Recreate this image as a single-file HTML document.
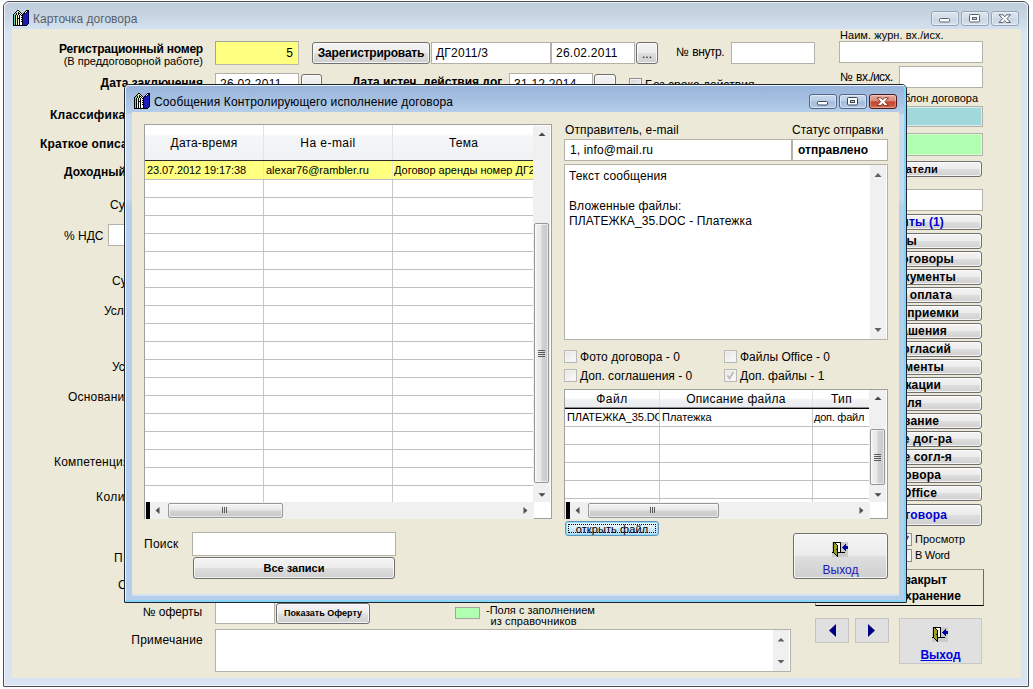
<!DOCTYPE html><html lang="ru"><head><meta charset="utf-8"><title>Карточка договора</title><style>
*{box-sizing:border-box;margin:0;padding:0}
html,body{width:1033px;height:689px;overflow:hidden;background:#fff}
body{position:relative;font-family:"Liberation Sans",sans-serif;font-size:12px;line-height:14px;color:#000}
.a{position:absolute;white-space:nowrap}
.b{font-weight:bold}
.r{text-align:right}
.c{text-align:center}
.s{font-size:11px;line-height:13px}
.f{position:absolute;background:#fff;border:1px solid #b4b2a8;white-space:nowrap;overflow:hidden;padding:3px 0 0 4px}
.btn{position:absolute;border:1px solid #707070;border-radius:3px;background:linear-gradient(#f4f4f4 0%,#ececec 48%,#dedede 52%,#cfcfcf 100%);box-shadow:inset 0 0 0 1px rgba(255,255,255,.75);white-space:nowrap;overflow:hidden;text-align:center}
.sb{position:absolute;left:815px;width:167px;height:16px;font-weight:bold;line-height:14px;letter-spacing:0.15px}
.sb span{position:absolute;top:0;text-align:right}
.win{position:absolute;overflow:hidden}
.cap{position:absolute;height:15px;width:28px;border:1px solid #93a3b7;border-radius:3px;background:linear-gradient(#dbe4ee 0%,#d3dde9 46%,#c9d5e3 52%,#d6e0eb 100%);box-shadow:inset 0 0 0 1px rgba(255,255,255,.45)}
.cap svg{position:absolute;left:0;top:0}
.hl{position:absolute;height:1px;background:#c0c0c0}
.vl{position:absolute;width:1px;background:#c0c0c0}
.chk{position:absolute;width:13px;height:13px;border:1px solid #b9b9b6;background:linear-gradient(135deg,#e4e4e2,#fdfdfd);box-shadow:inset 0 0 0 1px #f2f2f0}
</style></head><body>
<div class="win" style="left:3px;top:1px;width:1026px;height:686px;border:1px solid #464b53;border-radius:6px 6px 1px 1px;background:#d8e4f1">
<div class="a" style="left:0;top:0;width:1024px;height:30px;background:linear-gradient(#bfccda 0%,#c6d3e1 40%,#d0deec 75%,#d5e3f2 100%)"></div>
<div class="a" style="left:0;top:0;width:1024px;height:684px;border:1px solid rgba(255,255,255,.7);border-radius:6px 6px 0 0"></div>
</div>
<div class="a" style="left:12px;top:29px;width:1009px;height:649px;background:#ece9d8"></div>
<svg class="a" style="left:13px;top:10px" width="16" height="16" viewBox="0 0 16 16" shape-rendering="crispEdges"><rect x="4" y="0" width="2" height="1" fill="#000"/><rect x="13" y="0" width="3" height="1" fill="#000"/><rect x="3" y="1" width="1" height="1" fill="#000"/><rect x="4" y="1" width="2" height="1" fill="#f4f488"/><rect x="6" y="1" width="1" height="1" fill="#000"/><rect x="12" y="1" width="1" height="1" fill="#000"/><rect x="13" y="1" width="1" height="1" fill="#fff"/><rect x="14" y="1" width="1" height="1" fill="#000"/><rect x="15" y="1" width="1" height="1" fill="#00005c"/><rect x="2" y="2" width="1" height="1" fill="#000"/><rect x="3" y="2" width="1" height="1" fill="#62d2b4"/><rect x="4" y="2" width="1" height="1" fill="#f4f488"/><rect x="5" y="2" width="1" height="1" fill="#000"/><rect x="6" y="2" width="1" height="1" fill="#fff"/><rect x="7" y="2" width="1" height="1" fill="#000"/><rect x="11" y="2" width="1" height="1" fill="#000"/><rect x="12" y="2" width="1" height="1" fill="#fff"/><rect x="13" y="2" width="1" height="1" fill="#000"/><rect x="14" y="2" width="1" height="1" fill="#1c1cb4"/><rect x="15" y="2" width="1" height="1" fill="#00005c"/><rect x="1" y="3" width="1" height="1" fill="#000"/><rect x="2" y="3" width="1" height="1" fill="#62d2b4"/><rect x="3" y="3" width="1" height="1" fill="#000"/><rect x="4" y="3" width="1" height="1" fill="#f4f488"/><rect x="5" y="3" width="2" height="1" fill="#000"/><rect x="7" y="3" width="1" height="1" fill="#fff"/><rect x="8" y="3" width="1" height="1" fill="#000"/><rect x="10" y="3" width="2" height="1" fill="#000"/><rect x="12" y="3" width="3" height="1" fill="#1c1cb4"/><rect x="15" y="3" width="1" height="1" fill="#00005c"/><rect x="0" y="4" width="1" height="1" fill="#000"/><rect x="1" y="4" width="2" height="1" fill="#62d2b4"/><rect x="3" y="4" width="1" height="1" fill="#000"/><rect x="4" y="4" width="1" height="1" fill="#f4f488"/><rect x="5" y="4" width="1" height="1" fill="#000"/><rect x="6" y="4" width="1" height="1" fill="#fff"/><rect x="7" y="4" width="1" height="1" fill="#000"/><rect x="8" y="4" width="1" height="1" fill="#fff"/><rect x="9" y="4" width="1" height="1" fill="#000"/><rect x="10" y="4" width="5" height="1" fill="#1c1cb4"/><rect x="15" y="4" width="1" height="1" fill="#00005c"/><rect x="0" y="5" width="1" height="1" fill="#000"/><rect x="1" y="5" width="1" height="1" fill="#62d2b4"/><rect x="2" y="5" width="1" height="1" fill="#000"/><rect x="3" y="5" width="1" height="1" fill="#f4f488"/><rect x="4" y="5" width="1" height="1" fill="#000"/><rect x="5" y="5" width="1" height="1" fill="#fff"/><rect x="6" y="5" width="1" height="1" fill="#000"/><rect x="7" y="5" width="1" height="1" fill="#fff"/><rect x="8" y="5" width="2" height="1" fill="#000"/><rect x="10" y="5" width="5" height="1" fill="#1c1cb4"/><rect x="15" y="5" width="1" height="1" fill="#00005c"/><rect x="0" y="6" width="1" height="1" fill="#000"/><rect x="1" y="6" width="1" height="1" fill="#62d2b4"/><rect x="2" y="6" width="1" height="1" fill="#000"/><rect x="3" y="6" width="1" height="1" fill="#f4f488"/><rect x="4" y="6" width="1" height="1" fill="#000"/><rect x="5" y="6" width="1" height="1" fill="#fff"/><rect x="6" y="6" width="1" height="1" fill="#000"/><rect x="7" y="6" width="2" height="1" fill="#fff"/><rect x="9" y="6" width="1" height="1" fill="#000"/><rect x="10" y="6" width="5" height="1" fill="#1c1cb4"/><rect x="15" y="6" width="1" height="1" fill="#00005c"/><rect x="0" y="7" width="1" height="1" fill="#000"/><rect x="1" y="7" width="1" height="1" fill="#62d2b4"/><rect x="2" y="7" width="1" height="1" fill="#000"/><rect x="3" y="7" width="1" height="1" fill="#f4f488"/><rect x="4" y="7" width="1" height="1" fill="#000"/><rect x="5" y="7" width="1" height="1" fill="#fff"/><rect x="6" y="7" width="1" height="1" fill="#000"/><rect x="7" y="7" width="1" height="1" fill="#fff"/><rect x="8" y="7" width="2" height="1" fill="#000"/><rect x="10" y="7" width="5" height="1" fill="#1c1cb4"/><rect x="15" y="7" width="1" height="1" fill="#00005c"/><rect x="0" y="8" width="1" height="1" fill="#000"/><rect x="1" y="8" width="1" height="1" fill="#62d2b4"/><rect x="2" y="8" width="1" height="1" fill="#000"/><rect x="3" y="8" width="1" height="1" fill="#f4f488"/><rect x="4" y="8" width="3" height="1" fill="#000"/><rect x="7" y="8" width="2" height="1" fill="#fff"/><rect x="9" y="8" width="1" height="1" fill="#000"/><rect x="10" y="8" width="5" height="1" fill="#1c1cb4"/><rect x="15" y="8" width="1" height="1" fill="#00005c"/><rect x="0" y="9" width="1" height="1" fill="#000"/><rect x="1" y="9" width="1" height="1" fill="#62d2b4"/><rect x="2" y="9" width="1" height="1" fill="#000"/><rect x="3" y="9" width="1" height="1" fill="#f4f488"/><rect x="4" y="9" width="1" height="1" fill="#000"/><rect x="5" y="9" width="1" height="1" fill="#fff"/><rect x="6" y="9" width="1" height="1" fill="#000"/><rect x="7" y="9" width="1" height="1" fill="#fff"/><rect x="8" y="9" width="2" height="1" fill="#000"/><rect x="10" y="9" width="5" height="1" fill="#1c1cb4"/><rect x="15" y="9" width="1" height="1" fill="#00005c"/><rect x="0" y="10" width="1" height="1" fill="#000"/><rect x="1" y="10" width="1" height="1" fill="#62d2b4"/><rect x="2" y="10" width="1" height="1" fill="#000"/><rect x="3" y="10" width="1" height="1" fill="#f4f488"/><rect x="4" y="10" width="1" height="1" fill="#000"/><rect x="5" y="10" width="1" height="1" fill="#fff"/><rect x="6" y="10" width="1" height="1" fill="#000"/><rect x="7" y="10" width="2" height="1" fill="#fff"/><rect x="9" y="10" width="1" height="1" fill="#000"/><rect x="10" y="10" width="5" height="1" fill="#1c1cb4"/><rect x="15" y="10" width="1" height="1" fill="#00005c"/><rect x="0" y="11" width="1" height="1" fill="#000"/><rect x="1" y="11" width="1" height="1" fill="#62d2b4"/><rect x="2" y="11" width="1" height="1" fill="#000"/><rect x="3" y="11" width="1" height="1" fill="#f4f488"/><rect x="4" y="11" width="1" height="1" fill="#000"/><rect x="5" y="11" width="1" height="1" fill="#fff"/><rect x="6" y="11" width="1" height="1" fill="#000"/><rect x="7" y="11" width="1" height="1" fill="#fff"/><rect x="8" y="11" width="2" height="1" fill="#000"/><rect x="10" y="11" width="5" height="1" fill="#1c1cb4"/><rect x="15" y="11" width="1" height="1" fill="#00005c"/><rect x="0" y="12" width="1" height="1" fill="#000"/><rect x="1" y="12" width="1" height="1" fill="#62d2b4"/><rect x="2" y="12" width="1" height="1" fill="#000"/><rect x="3" y="12" width="1" height="1" fill="#f4f488"/><rect x="4" y="12" width="1" height="1" fill="#000"/><rect x="5" y="12" width="1" height="1" fill="#fff"/><rect x="6" y="12" width="1" height="1" fill="#000"/><rect x="7" y="12" width="2" height="1" fill="#fff"/><rect x="9" y="12" width="1" height="1" fill="#000"/><rect x="10" y="12" width="5" height="1" fill="#1c1cb4"/><rect x="15" y="12" width="1" height="1" fill="#00005c"/><rect x="0" y="13" width="1" height="1" fill="#000"/><rect x="1" y="13" width="1" height="1" fill="#62d2b4"/><rect x="2" y="13" width="1" height="1" fill="#000"/><rect x="3" y="13" width="1" height="1" fill="#f4f488"/><rect x="4" y="13" width="1" height="1" fill="#000"/><rect x="5" y="13" width="1" height="1" fill="#fff"/><rect x="6" y="13" width="1" height="1" fill="#000"/><rect x="7" y="13" width="2" height="1" fill="#fff"/><rect x="9" y="13" width="1" height="1" fill="#000"/><rect x="10" y="13" width="5" height="1" fill="#1c1cb4"/><rect x="15" y="13" width="1" height="1" fill="#00005c"/><rect x="0" y="14" width="1" height="1" fill="#000"/><rect x="1" y="14" width="1" height="1" fill="#62d2b4"/><rect x="2" y="14" width="1" height="1" fill="#000"/><rect x="3" y="14" width="1" height="1" fill="#f4f488"/><rect x="4" y="14" width="1" height="1" fill="#000"/><rect x="5" y="14" width="1" height="1" fill="#fff"/><rect x="6" y="14" width="1" height="1" fill="#000"/><rect x="7" y="14" width="2" height="1" fill="#fff"/><rect x="9" y="14" width="1" height="1" fill="#000"/><rect x="10" y="14" width="4" height="1" fill="#1c1cb4"/><rect x="14" y="14" width="1" height="1" fill="#000"/><rect x="0" y="15" width="14" height="1" fill="#000"/></svg>
<div class="a" style="left:33px;top:12px;color:#5a5f66;font-size:12px">Карточка договора</div>
<div class="cap" style="left:931px;top:11px;"><svg width="26" height="13" viewBox="0 0 26 13"><rect x="7.5" y="6.5" width="10" height="3.5" rx="1" fill="#fff" stroke="#5a626c"/></svg></div>
<div class="cap" style="left:961px;top:11px;"><svg width="26" height="13" viewBox="0 0 26 13"><rect x="7.5" y="2.5" width="10" height="7.5" rx="1" fill="#fff" stroke="#5a626c"/><rect x="10.5" y="5.5" width="4" height="2" fill="#c8d0da" stroke="#5a626c"/></svg></div>
<div class="cap" style="left:991px;top:11px;"><svg width="26" height="13" viewBox="0 0 26 13"><path d="M7 2.8 L11 2.8 L12.75 4.8 L14.5 2.8 L18.5 2.8 L14.9 6.65 L18.5 10.5 L14.5 10.5 L12.75 8.5 L11 10.5 L7 10.5 L10.6 6.65 Z" fill="#fff" stroke="#5a626c" stroke-width="1" stroke-linejoin="round"/></svg></div>
<div class="a r b" style="left:-97px;width:300px;top:42px;letter-spacing:-0.2px">Регистрационный номер</div>
<div class="a r s" style="left:-97px;width:300px;top:55px;">(В преддоговорной работе)</div>
<div class="a r b" style="left:-97px;width:300px;top:76px;">Дата заключения</div>
<div class="a b" style="left:50px;top:108px;letter-spacing:0.25px">Классификатор</div>
<div class="a b" style="left:40px;top:137px;letter-spacing:0.15px">Краткое описание</div>
<div class="a b" style="left:64px;top:165px">Доходный</div>
<div class="a " style="left:110px;top:198px;">Сумма</div>
<div class="a " style="left:64px;top:229px;">% НДС</div>
<div class="f" style="left:108px;top:224px;width:40px;height:22px"></div>
<div class="a " style="left:112px;top:274px;">Сумма</div>
<div class="a " style="left:104px;top:304px;">Условия</div>
<div class="a " style="left:112px;top:360px;">Условия</div>
<div class="a " style="left:68px;top:390px;letter-spacing:0.2px">Основание</div>
<div class="a " style="left:54px;top:455px;letter-spacing:0.2px">Компетенция</div>
<div class="a " style="left:96px;top:490px;letter-spacing:0.45px">Количество</div>
<div class="a " style="left:114px;top:551px;">П</div>
<div class="a " style="left:118px;top:578px;">С</div>
<div class="a r " style="left:-98px;width:300px;top:605px;letter-spacing:-0.1px">№ оферты</div>
<div class="a r " style="left:-97px;width:300px;top:633px;letter-spacing:0.22px">Примечание</div>
<div class="f r" style="left:215px;top:41px;width:84px;height:24px;background:#ffff80;border:1px solid #b8b8b0;border-top-color:#a4a49c;border-left-color:#a4a49c;padding:4px 5px 0 0">5</div>
<div class="btn b" style="left:312px;top:42px;width:118px;height:22px;padding-top:3px;letter-spacing:-0.2px">Зарегистрировать</div>
<div class="f" style="left:431px;top:42px;width:120px;height:22px;letter-spacing:0.2px">ДГ2011/3</div>
<div class="f" style="left:551px;top:42px;width:84px;height:22px;letter-spacing:0.25px">26.02.2011</div>
<div class="btn" style="left:636px;top:42px;width:22px;height:22px;padding-top:4px">...</div>
<div class="a " style="left:676px;top:45px;letter-spacing:-0.45px;word-spacing:1px">№ внутр.</div>
<div class="f" style="left:731px;top:42px;width:84px;height:22px"></div>
<div class="a s" style="left:840px;top:29px;letter-spacing:0.05px">Наим. журн. вх./исх.</div>
<div class="f" style="left:839px;top:41px;width:144px;height:22px"></div>
<div class="a " style="left:840px;top:70px;letter-spacing:-0.55px;word-spacing:1px">№ вх./исх.</div>
<div class="f" style="left:899px;top:66px;width:84px;height:22px"></div>
<div class="f" style="left:215px;top:73px;width:84px;height:22px;letter-spacing:0.25px">26.02.2011</div>
<div class="btn" style="left:301px;top:74px;width:21px;height:22px"></div>
<div class="a b" style="left:352px;top:75px;">Дата истеч. действия дог.</div>
<div class="f" style="left:509px;top:73px;width:84px;height:22px;letter-spacing:0.25px">31.12.2014</div>
<div class="btn" style="left:594px;top:74px;width:22px;height:22px"></div>
<div class="chk" style="left:629px;top:78px;border-color:#8e8f8f;background:linear-gradient(135deg,#d0d4d8,#f4f4f4)"></div>
<div class="a " style="left:645px;top:78px;">Без срока действия</div>
<div class="a r s" style="left:678px;width:300px;top:92px;">Шаблон договора</div>
<div class="f" style="left:815px;top:106px;width:168px;height:21px;background:#a0d8dc;box-shadow:inset 0 0 0 1px rgba(255,255,255,.55)"></div>
<div class="f" style="left:815px;top:133px;width:168px;height:23px;background:#b0ffb0;box-shadow:inset 0 0 0 1px rgba(255,255,255,.45)"></div>
<div class="btn sb" style="top:161px;height:16px;color:#000;text-align:left"><span style="right:43px;top:0px;font-size:11px;">Получатели</span></div>
<div class="f" style="left:815px;top:189px;width:168px;height:22px"></div>
<div class="btn sb" style="top:214px;height:16px;color:#0000d0;text-align:left"><span style="right:37px;top:0px;font-size:12px;">Контрагенты (1)</span></div>
<div class="btn sb" style="top:233px;height:16px;color:#000;text-align:left"><span style="right:64px;top:0px;font-size:12px;">Этапы</span></div>
<div class="btn sb" style="top:251px;height:16px;color:#000;text-align:left"><span style="right:27px;top:0px;font-size:12px;">Субдоговоры</span></div>
<div class="btn sb" style="top:269px;height:16px;color:#000;text-align:left"><span style="right:25px;top:0px;font-size:12px;">Документы</span></div>
<div class="btn sb" style="top:287px;height:16px;color:#000;text-align:left"><span style="right:29px;top:0px;font-size:12px;">Счета и оплата</span></div>
<div class="btn sb" style="top:305px;height:16px;color:#000;text-align:left"><span style="right:22px;top:0px;font-size:12px;">Акты сдачи-приемки</span></div>
<div class="btn sb" style="top:323px;height:16px;color:#000;text-align:left"><span style="right:34px;top:0px;font-size:12px;">Доп. соглашения</span></div>
<div class="btn sb" style="top:341px;height:16px;color:#000;text-align:left"><span style="right:30px;top:0px;font-size:12px;">Протоколы разногласий</span></div>
<div class="btn sb" style="top:359px;height:16px;color:#000;text-align:left"><span style="right:37px;top:0px;font-size:12px;">Комментарии, документы</span></div>
<div class="btn sb" style="top:377px;height:16px;color:#000;text-align:left"><span style="right:40px;top:0px;font-size:12px;">Спецификации</span></div>
<div class="btn sb" style="top:395px;height:16px;color:#000;text-align:left"><span style="right:59px;top:0px;font-size:12px;">Контроля</span></div>
<div class="btn sb" style="top:413px;height:16px;color:#000;text-align:left"><span style="right:42px;top:0px;font-size:12px;">Согласование</span></div>
<div class="btn sb" style="top:431px;height:16px;color:#000;text-align:left"><span style="right:29px;top:0px;font-size:12px;">Исполнение дог-ра</span></div>
<div class="btn sb" style="top:449px;height:16px;color:#000;text-align:left"><span style="right:29px;top:0px;font-size:12px;">Исполнение согл-я</span></div>
<div class="btn sb" style="top:467px;height:16px;color:#000;text-align:left"><span style="right:40px;top:0px;font-size:12px;">Фото договора</span></div>
<div class="btn sb" style="top:485px;height:16px;color:#000;text-align:left"><span style="right:44px;top:0px;font-size:12px;">Файлы Office</span></div>
<div class="btn sb" style="top:504px;height:22px;color:#0000d0;text-align:left"><span style="right:34px;top:3px;font-size:12px;">Текст договора</span></div>
<div class="chk" style="left:899px;top:533px;border-color:#8e8f8f"><svg width="11" height="11" viewBox="0 0 11 11"><path d="M2.5 5.5 L4.5 8.5 L8.5 2" fill="none" stroke="#404880" stroke-width="1.6"/></svg></div>
<div class="a s" style="left:915px;top:533px;">Просмотр</div>
<div class="chk" style="left:899px;top:549px;border-color:#8e8f8f"></div>
<div class="a s" style="left:915px;top:549px;letter-spacing:-0.3px">В Word</div>
<div class="a" style="left:815px;top:569px;width:169px;height:37px;border:1px solid #000;border-top-color:#9a9a90;border-left-color:#9a9a90;border-right-color:#6a6a64"></div>
<div class="a b" style="left:905px;top:573px;font-size:12px;line-height:15.5px">закрыт<br>хранение</div>
<div class="f" style="left:215px;top:602px;width:60px;height:22px"></div>
<div class="btn b" style="left:276px;top:603px;width:94px;height:21px;font-size:9px;padding-top:2px">Показать Оферту</div>
<div class="a" style="left:455px;top:607px;width:25px;height:12px;background:#b0ffb0;border:1px solid #a4a49c"></div>
<div class="a s" style="left:486px;top:605px;line-height:11.3px">-Поля с заполнением<br><span style="margin-left:4.5px;letter-spacing:0.12px">из справочников</span></div>
<div class="f" style="left:215px;top:629px;width:576px;height:43px"></div>
<svg class="a" style="left:773px;top:630px" width="17" height="41" viewBox="0 0 17 41"><rect width="16" height="41" fill="#f0f0f0"/><path d="M4.5 11.5 L11.5 11.5 L8 8z" fill="#606060"/><path d="M4.5 30 L11.5 30 L8 33.5z" fill="#606060"/></svg>
<div class="a" style="left:815px;top:618px;width:34px;height:25px;background:#e0e0e0;border:1px solid #c4c4c0"><svg width="32" height="23" viewBox="0 0 32 23"><path d="M20 5 L20 18 L13 11.5z" fill="#000080"/></svg></div>
<div class="a" style="left:855px;top:618px;width:34px;height:25px;background:#e0e0e0;border:1px solid #c4c4c0"><svg width="32" height="23" viewBox="0 0 32 23"><path d="M12 5 L12 18 L19 11.5z" fill="#000080"/></svg></div>
<div class="a" style="left:899px;top:618px;width:83px;height:46px;background:#e0e0e0;border:1px solid #c8c8c4"></div>
<svg class="a" style="left:932px;top:627px" width="16" height="16" viewBox="0 0 16 16" shape-rendering="crispEdges"><rect x="0" y="0" width="1" height="1" fill="#cbcbcb"/><rect x="1" y="0" width="8" height="1" fill="#000"/><rect x="9" y="0" width="7" height="1" fill="#cbcbcb"/><rect x="0" y="1" width="1" height="1" fill="#cbcbcb"/><rect x="1" y="1" width="1" height="1" fill="#000"/><rect x="2" y="1" width="1" height="1" fill="#a0a024"/><rect x="3" y="1" width="1" height="1" fill="#000"/><rect x="4" y="1" width="4" height="1" fill="#fff"/><rect x="8" y="1" width="1" height="1" fill="#000"/><rect x="9" y="1" width="7" height="1" fill="#cbcbcb"/><rect x="0" y="2" width="1" height="1" fill="#cbcbcb"/><rect x="1" y="2" width="1" height="1" fill="#000"/><rect x="2" y="2" width="2" height="1" fill="#a0a024"/><rect x="4" y="2" width="1" height="1" fill="#000"/><rect x="5" y="2" width="3" height="1" fill="#fff"/><rect x="8" y="2" width="1" height="1" fill="#000"/><rect x="9" y="2" width="4" height="1" fill="#cbcbcb"/><rect x="13" y="2" width="1" height="1" fill="#0000a0"/><rect x="14" y="2" width="2" height="1" fill="#cbcbcb"/><rect x="0" y="3" width="1" height="1" fill="#cbcbcb"/><rect x="1" y="3" width="1" height="1" fill="#000"/><rect x="2" y="3" width="3" height="1" fill="#a0a024"/><rect x="5" y="3" width="1" height="1" fill="#000"/><rect x="6" y="3" width="2" height="1" fill="#fff"/><rect x="8" y="3" width="1" height="1" fill="#000"/><rect x="9" y="3" width="3" height="1" fill="#cbcbcb"/><rect x="12" y="3" width="2" height="1" fill="#0000a0"/><rect x="14" y="3" width="2" height="1" fill="#cbcbcb"/><rect x="0" y="4" width="1" height="1" fill="#cbcbcb"/><rect x="1" y="4" width="1" height="1" fill="#000"/><rect x="2" y="4" width="3" height="1" fill="#a0a024"/><rect x="5" y="4" width="1" height="1" fill="#000"/><rect x="6" y="4" width="2" height="1" fill="#fff"/><rect x="8" y="4" width="1" height="1" fill="#000"/><rect x="9" y="4" width="2" height="1" fill="#cbcbcb"/><rect x="11" y="4" width="5" height="1" fill="#0000a0"/><rect x="0" y="5" width="1" height="1" fill="#cbcbcb"/><rect x="1" y="5" width="1" height="1" fill="#000"/><rect x="2" y="5" width="3" height="1" fill="#a0a024"/><rect x="5" y="5" width="1" height="1" fill="#000"/><rect x="6" y="5" width="2" height="1" fill="#fff"/><rect x="8" y="5" width="1" height="1" fill="#000"/><rect x="9" y="5" width="1" height="1" fill="#cbcbcb"/><rect x="10" y="5" width="6" height="1" fill="#0000a0"/><rect x="0" y="6" width="1" height="1" fill="#cbcbcb"/><rect x="1" y="6" width="1" height="1" fill="#000"/><rect x="2" y="6" width="3" height="1" fill="#a0a024"/><rect x="5" y="6" width="1" height="1" fill="#000"/><rect x="6" y="6" width="2" height="1" fill="#fff"/><rect x="8" y="6" width="1" height="1" fill="#000"/><rect x="9" y="6" width="2" height="1" fill="#cbcbcb"/><rect x="11" y="6" width="5" height="1" fill="#0000a0"/><rect x="0" y="7" width="1" height="1" fill="#cbcbcb"/><rect x="1" y="7" width="1" height="1" fill="#000"/><rect x="2" y="7" width="2" height="1" fill="#a0a024"/><rect x="4" y="7" width="2" height="1" fill="#000"/><rect x="6" y="7" width="2" height="1" fill="#fff"/><rect x="8" y="7" width="1" height="1" fill="#000"/><rect x="9" y="7" width="3" height="1" fill="#cbcbcb"/><rect x="12" y="7" width="2" height="1" fill="#0000a0"/><rect x="14" y="7" width="2" height="1" fill="#cbcbcb"/><rect x="0" y="8" width="1" height="1" fill="#cbcbcb"/><rect x="1" y="8" width="1" height="1" fill="#000"/><rect x="2" y="8" width="3" height="1" fill="#a0a024"/><rect x="5" y="8" width="1" height="1" fill="#000"/><rect x="6" y="8" width="2" height="1" fill="#fff"/><rect x="8" y="8" width="1" height="1" fill="#000"/><rect x="9" y="8" width="4" height="1" fill="#cbcbcb"/><rect x="13" y="8" width="1" height="1" fill="#0000a0"/><rect x="14" y="8" width="2" height="1" fill="#cbcbcb"/><rect x="0" y="9" width="1" height="1" fill="#cbcbcb"/><rect x="1" y="9" width="1" height="1" fill="#000"/><rect x="2" y="9" width="3" height="1" fill="#a0a024"/><rect x="5" y="9" width="1" height="1" fill="#000"/><rect x="6" y="9" width="2" height="1" fill="#fff"/><rect x="8" y="9" width="1" height="1" fill="#000"/><rect x="9" y="9" width="7" height="1" fill="#cbcbcb"/><rect x="0" y="10" width="2" height="1" fill="#000"/><rect x="2" y="10" width="3" height="1" fill="#a0a024"/><rect x="5" y="10" width="8" height="1" fill="#000"/><rect x="13" y="10" width="3" height="1" fill="#cbcbcb"/><rect x="0" y="11" width="2" height="1" fill="#cbcbcb"/><rect x="2" y="11" width="1" height="1" fill="#000"/><rect x="3" y="11" width="2" height="1" fill="#a0a024"/><rect x="5" y="11" width="1" height="1" fill="#000"/><rect x="6" y="11" width="10" height="1" fill="#cbcbcb"/><rect x="0" y="12" width="3" height="1" fill="#cbcbcb"/><rect x="3" y="12" width="1" height="1" fill="#000"/><rect x="4" y="12" width="1" height="1" fill="#a0a024"/><rect x="5" y="12" width="1" height="1" fill="#000"/><rect x="6" y="12" width="10" height="1" fill="#cbcbcb"/><rect x="0" y="13" width="4" height="1" fill="#cbcbcb"/><rect x="4" y="13" width="2" height="1" fill="#000"/><rect x="6" y="13" width="10" height="1" fill="#cbcbcb"/><rect x="0" y="14" width="5" height="1" fill="#cbcbcb"/><rect x="5" y="14" width="1" height="1" fill="#000"/><rect x="6" y="14" width="10" height="1" fill="#cbcbcb"/></svg>
<div class="a b c" style="left:899px;width:83px;top:648px;color:#0000e0;font-size:12px;text-decoration:underline">Выход</div>
<div class="win" style="left:124px;top:84px;width:783px;height:519px;border:1px solid #1c2530;border-radius:5px 5px 1px 1px;background:linear-gradient(#cbdcf0 0px,#c6d9ee 114px,#b4cfeb 121px,#b4cfeb 100%)">
<div class="a" style="left:0;top:0;width:781px;height:29px;background:linear-gradient(#96b3da 0%,#a6c0e2 50%,#b6cfea 100%)"></div>
<div class="a" style="left:0;top:0;width:781px;height:517px;border-style:solid;border-width:1px 2px 2px 1px;border-color:rgba(255,255,255,.85) #86d5f6 #86d5f6 rgba(255,255,255,.85);border-radius:4px 4px 0 0"></div>
</div>
<div class="a" style="left:132px;top:112px;width:767px;height:484px;background:#ece9d8;border-bottom:2px solid #d2e1f0"></div>
<svg class="a" style="left:134px;top:93px" width="16" height="16" viewBox="0 0 16 16" shape-rendering="crispEdges"><rect x="4" y="0" width="2" height="1" fill="#000"/><rect x="13" y="0" width="3" height="1" fill="#000"/><rect x="3" y="1" width="1" height="1" fill="#000"/><rect x="4" y="1" width="2" height="1" fill="#f4f488"/><rect x="6" y="1" width="1" height="1" fill="#000"/><rect x="12" y="1" width="1" height="1" fill="#000"/><rect x="13" y="1" width="1" height="1" fill="#fff"/><rect x="14" y="1" width="1" height="1" fill="#000"/><rect x="15" y="1" width="1" height="1" fill="#00005c"/><rect x="2" y="2" width="1" height="1" fill="#000"/><rect x="3" y="2" width="1" height="1" fill="#62d2b4"/><rect x="4" y="2" width="1" height="1" fill="#f4f488"/><rect x="5" y="2" width="1" height="1" fill="#000"/><rect x="6" y="2" width="1" height="1" fill="#fff"/><rect x="7" y="2" width="1" height="1" fill="#000"/><rect x="11" y="2" width="1" height="1" fill="#000"/><rect x="12" y="2" width="1" height="1" fill="#fff"/><rect x="13" y="2" width="1" height="1" fill="#000"/><rect x="14" y="2" width="1" height="1" fill="#1c1cb4"/><rect x="15" y="2" width="1" height="1" fill="#00005c"/><rect x="1" y="3" width="1" height="1" fill="#000"/><rect x="2" y="3" width="1" height="1" fill="#62d2b4"/><rect x="3" y="3" width="1" height="1" fill="#000"/><rect x="4" y="3" width="1" height="1" fill="#f4f488"/><rect x="5" y="3" width="2" height="1" fill="#000"/><rect x="7" y="3" width="1" height="1" fill="#fff"/><rect x="8" y="3" width="1" height="1" fill="#000"/><rect x="10" y="3" width="2" height="1" fill="#000"/><rect x="12" y="3" width="3" height="1" fill="#1c1cb4"/><rect x="15" y="3" width="1" height="1" fill="#00005c"/><rect x="0" y="4" width="1" height="1" fill="#000"/><rect x="1" y="4" width="2" height="1" fill="#62d2b4"/><rect x="3" y="4" width="1" height="1" fill="#000"/><rect x="4" y="4" width="1" height="1" fill="#f4f488"/><rect x="5" y="4" width="1" height="1" fill="#000"/><rect x="6" y="4" width="1" height="1" fill="#fff"/><rect x="7" y="4" width="1" height="1" fill="#000"/><rect x="8" y="4" width="1" height="1" fill="#fff"/><rect x="9" y="4" width="1" height="1" fill="#000"/><rect x="10" y="4" width="5" height="1" fill="#1c1cb4"/><rect x="15" y="4" width="1" height="1" fill="#00005c"/><rect x="0" y="5" width="1" height="1" fill="#000"/><rect x="1" y="5" width="1" height="1" fill="#62d2b4"/><rect x="2" y="5" width="1" height="1" fill="#000"/><rect x="3" y="5" width="1" height="1" fill="#f4f488"/><rect x="4" y="5" width="1" height="1" fill="#000"/><rect x="5" y="5" width="1" height="1" fill="#fff"/><rect x="6" y="5" width="1" height="1" fill="#000"/><rect x="7" y="5" width="1" height="1" fill="#fff"/><rect x="8" y="5" width="2" height="1" fill="#000"/><rect x="10" y="5" width="5" height="1" fill="#1c1cb4"/><rect x="15" y="5" width="1" height="1" fill="#00005c"/><rect x="0" y="6" width="1" height="1" fill="#000"/><rect x="1" y="6" width="1" height="1" fill="#62d2b4"/><rect x="2" y="6" width="1" height="1" fill="#000"/><rect x="3" y="6" width="1" height="1" fill="#f4f488"/><rect x="4" y="6" width="1" height="1" fill="#000"/><rect x="5" y="6" width="1" height="1" fill="#fff"/><rect x="6" y="6" width="1" height="1" fill="#000"/><rect x="7" y="6" width="2" height="1" fill="#fff"/><rect x="9" y="6" width="1" height="1" fill="#000"/><rect x="10" y="6" width="5" height="1" fill="#1c1cb4"/><rect x="15" y="6" width="1" height="1" fill="#00005c"/><rect x="0" y="7" width="1" height="1" fill="#000"/><rect x="1" y="7" width="1" height="1" fill="#62d2b4"/><rect x="2" y="7" width="1" height="1" fill="#000"/><rect x="3" y="7" width="1" height="1" fill="#f4f488"/><rect x="4" y="7" width="1" height="1" fill="#000"/><rect x="5" y="7" width="1" height="1" fill="#fff"/><rect x="6" y="7" width="1" height="1" fill="#000"/><rect x="7" y="7" width="1" height="1" fill="#fff"/><rect x="8" y="7" width="2" height="1" fill="#000"/><rect x="10" y="7" width="5" height="1" fill="#1c1cb4"/><rect x="15" y="7" width="1" height="1" fill="#00005c"/><rect x="0" y="8" width="1" height="1" fill="#000"/><rect x="1" y="8" width="1" height="1" fill="#62d2b4"/><rect x="2" y="8" width="1" height="1" fill="#000"/><rect x="3" y="8" width="1" height="1" fill="#f4f488"/><rect x="4" y="8" width="3" height="1" fill="#000"/><rect x="7" y="8" width="2" height="1" fill="#fff"/><rect x="9" y="8" width="1" height="1" fill="#000"/><rect x="10" y="8" width="5" height="1" fill="#1c1cb4"/><rect x="15" y="8" width="1" height="1" fill="#00005c"/><rect x="0" y="9" width="1" height="1" fill="#000"/><rect x="1" y="9" width="1" height="1" fill="#62d2b4"/><rect x="2" y="9" width="1" height="1" fill="#000"/><rect x="3" y="9" width="1" height="1" fill="#f4f488"/><rect x="4" y="9" width="1" height="1" fill="#000"/><rect x="5" y="9" width="1" height="1" fill="#fff"/><rect x="6" y="9" width="1" height="1" fill="#000"/><rect x="7" y="9" width="1" height="1" fill="#fff"/><rect x="8" y="9" width="2" height="1" fill="#000"/><rect x="10" y="9" width="5" height="1" fill="#1c1cb4"/><rect x="15" y="9" width="1" height="1" fill="#00005c"/><rect x="0" y="10" width="1" height="1" fill="#000"/><rect x="1" y="10" width="1" height="1" fill="#62d2b4"/><rect x="2" y="10" width="1" height="1" fill="#000"/><rect x="3" y="10" width="1" height="1" fill="#f4f488"/><rect x="4" y="10" width="1" height="1" fill="#000"/><rect x="5" y="10" width="1" height="1" fill="#fff"/><rect x="6" y="10" width="1" height="1" fill="#000"/><rect x="7" y="10" width="2" height="1" fill="#fff"/><rect x="9" y="10" width="1" height="1" fill="#000"/><rect x="10" y="10" width="5" height="1" fill="#1c1cb4"/><rect x="15" y="10" width="1" height="1" fill="#00005c"/><rect x="0" y="11" width="1" height="1" fill="#000"/><rect x="1" y="11" width="1" height="1" fill="#62d2b4"/><rect x="2" y="11" width="1" height="1" fill="#000"/><rect x="3" y="11" width="1" height="1" fill="#f4f488"/><rect x="4" y="11" width="1" height="1" fill="#000"/><rect x="5" y="11" width="1" height="1" fill="#fff"/><rect x="6" y="11" width="1" height="1" fill="#000"/><rect x="7" y="11" width="1" height="1" fill="#fff"/><rect x="8" y="11" width="2" height="1" fill="#000"/><rect x="10" y="11" width="5" height="1" fill="#1c1cb4"/><rect x="15" y="11" width="1" height="1" fill="#00005c"/><rect x="0" y="12" width="1" height="1" fill="#000"/><rect x="1" y="12" width="1" height="1" fill="#62d2b4"/><rect x="2" y="12" width="1" height="1" fill="#000"/><rect x="3" y="12" width="1" height="1" fill="#f4f488"/><rect x="4" y="12" width="1" height="1" fill="#000"/><rect x="5" y="12" width="1" height="1" fill="#fff"/><rect x="6" y="12" width="1" height="1" fill="#000"/><rect x="7" y="12" width="2" height="1" fill="#fff"/><rect x="9" y="12" width="1" height="1" fill="#000"/><rect x="10" y="12" width="5" height="1" fill="#1c1cb4"/><rect x="15" y="12" width="1" height="1" fill="#00005c"/><rect x="0" y="13" width="1" height="1" fill="#000"/><rect x="1" y="13" width="1" height="1" fill="#62d2b4"/><rect x="2" y="13" width="1" height="1" fill="#000"/><rect x="3" y="13" width="1" height="1" fill="#f4f488"/><rect x="4" y="13" width="1" height="1" fill="#000"/><rect x="5" y="13" width="1" height="1" fill="#fff"/><rect x="6" y="13" width="1" height="1" fill="#000"/><rect x="7" y="13" width="2" height="1" fill="#fff"/><rect x="9" y="13" width="1" height="1" fill="#000"/><rect x="10" y="13" width="5" height="1" fill="#1c1cb4"/><rect x="15" y="13" width="1" height="1" fill="#00005c"/><rect x="0" y="14" width="1" height="1" fill="#000"/><rect x="1" y="14" width="1" height="1" fill="#62d2b4"/><rect x="2" y="14" width="1" height="1" fill="#000"/><rect x="3" y="14" width="1" height="1" fill="#f4f488"/><rect x="4" y="14" width="1" height="1" fill="#000"/><rect x="5" y="14" width="1" height="1" fill="#fff"/><rect x="6" y="14" width="1" height="1" fill="#000"/><rect x="7" y="14" width="2" height="1" fill="#fff"/><rect x="9" y="14" width="1" height="1" fill="#000"/><rect x="10" y="14" width="4" height="1" fill="#1c1cb4"/><rect x="14" y="14" width="1" height="1" fill="#000"/><rect x="0" y="15" width="14" height="1" fill="#000"/></svg>
<div class="a" style="left:154px;top:95px;font-size:12px;letter-spacing:0.135px">Сообщения Контролирующего исполнение договора</div>
<div class="cap" style="left:809px;top:94px;border-color:#52688a;background:linear-gradient(#c9d9ec 0%,#b9cde5 46%,#a3bcda 52%,#b4cae4 100%);box-shadow:inset 0 0 0 1px rgba(255,255,255,.45)"><svg width="26" height="13" viewBox="0 0 26 13"><rect x="7.5" y="6.5" width="10" height="3.5" rx="1" fill="#fff" stroke="#3a4658"/></svg></div>
<div class="cap" style="left:839px;top:94px;border-color:#52688a;background:linear-gradient(#c9d9ec 0%,#b9cde5 46%,#a3bcda 52%,#b4cae4 100%);box-shadow:inset 0 0 0 1px rgba(255,255,255,.45)"><svg width="26" height="13" viewBox="0 0 26 13"><rect x="7.5" y="2.5" width="10" height="7.5" rx="1" fill="#fff" stroke="#3a4658"/><rect x="10.5" y="5.5" width="4" height="2" fill="#c8d0da" stroke="#3a4658"/></svg></div>
<div class="cap" style="left:869px;top:94px;border-color:#4a1c20;background:linear-gradient(#e6b0a4 0%,#d98777 46%,#c5432c 52%,#cb553d 80%,#d67a60 100%);box-shadow:inset 0 0 0 1px rgba(255,255,255,.3)"><svg width="26" height="13" viewBox="0 0 26 13"><path d="M7 2.8 L11 2.8 L12.75 4.8 L14.5 2.8 L18.5 2.8 L14.9 6.65 L18.5 10.5 L14.5 10.5 L12.75 8.5 L11 10.5 L7 10.5 L10.6 6.65 Z" fill="#fff" stroke="#8a3828" stroke-width="1" stroke-linejoin="round"/></svg></div>
<div class="a" style="left:144px;top:124px;width:408px;height:395px;background:#fff;border:1px solid #a0a0a0"></div>
<div class="a" style="left:145px;top:125px;width:389px;height:36px;background:linear-gradient(#fff 0%,#fff 25%,#f5f6f8 32%,#eff1f4 100%);border-bottom:1px solid #2a2a2a"></div>
<div class="vl" style="left:263px;top:125px;height:35px;background:#e2e3e6"></div>
<div class="vl" style="left:263px;top:179px;height:323px;background:#c8c8c8"></div>
<div class="vl" style="left:392px;top:125px;height:35px;background:#e2e3e6"></div>
<div class="vl" style="left:392px;top:179px;height:323px;background:#c8c8c8"></div>
<div class="a c" style="left:145px;width:118px;top:136px;letter-spacing:0.18px">Дата-время</div>
<div class="a c" style="left:264px;width:128px;top:136px;letter-spacing:0.45px">На e-mail</div>
<div class="a c" style="left:393px;width:141px;top:136px;letter-spacing:0.2px">Тема</div>
<div class="a" style="left:145px;top:161px;width:389px;height:18px;background:#ffff80"></div>
<div class="vl" style="left:263px;top:161px;height:18px;background:#ececc0"></div>
<div class="vl" style="left:392px;top:161px;height:18px;background:#ececc0"></div>
<div class="a s" style="left:147px;top:164px;letter-spacing:-0.1px">23.07.2012 19:17:38</div>
<div class="a s" style="left:266px;top:164px">alexar76@rambler.ru</div>
<div class="a s" style="left:394px;top:164px;width:140px;overflow:hidden">Договор аренды номер ДГ2011/3</div>
<div class="hl" style="left:145px;top:179px;width:389px"></div>
<div class="hl" style="left:145px;top:197px;width:389px"></div>
<div class="hl" style="left:145px;top:215px;width:389px"></div>
<div class="hl" style="left:145px;top:233px;width:389px"></div>
<div class="hl" style="left:145px;top:251px;width:389px"></div>
<div class="hl" style="left:145px;top:269px;width:389px"></div>
<div class="hl" style="left:145px;top:287px;width:389px"></div>
<div class="hl" style="left:145px;top:305px;width:389px"></div>
<div class="hl" style="left:145px;top:323px;width:389px"></div>
<div class="hl" style="left:145px;top:341px;width:389px"></div>
<div class="hl" style="left:145px;top:359px;width:389px"></div>
<div class="hl" style="left:145px;top:377px;width:389px"></div>
<div class="hl" style="left:145px;top:395px;width:389px"></div>
<div class="hl" style="left:145px;top:413px;width:389px"></div>
<div class="hl" style="left:145px;top:431px;width:389px"></div>
<div class="hl" style="left:145px;top:449px;width:389px"></div>
<div class="hl" style="left:145px;top:467px;width:389px"></div>
<div class="hl" style="left:145px;top:485px;width:389px"></div>
<div class="a" style="left:533px;top:126px;width:17px;height:376px;background:#f0f0f0"></div>
<svg class="a" style="left:533px;top:126px" width="17" height="17"><path d="M5.5 10 L12.5 10 L9 6.5z" fill="#484848"/></svg>
<svg class="a" style="left:533px;top:485px" width="17" height="17"><path d="M5.5 8.2 L12.5 8.2 L9 11.8z" fill="#484848"/></svg>
<div class="a" style="left:534px;top:223px;width:15px;height:260px;border:1px solid #979797;border-radius:2px;background:linear-gradient(90deg,#f3f3f3 0%,#e8e8e9 45%,#d2d2d3 55%,#c8c8c9 100%);box-shadow:inset 0 0 0 1px rgba(255,255,255,.6)"></div>
<div class="a" style="left:538px;top:350px;width:7px;height:1px;background:#5a5a5a"></div>
<div class="a" style="left:538px;top:352px;width:7px;height:1px;background:#5a5a5a"></div>
<div class="a" style="left:538px;top:354px;width:7px;height:1px;background:#5a5a5a"></div>
<div class="a" style="left:538px;top:356px;width:7px;height:1px;background:#5a5a5a"></div>
<div class="a" style="left:145px;top:502px;width:389px;height:17px;background:#f0f0f0"></div>
<div class="a" style="left:146px;top:502px;width:4px;height:17px;background:#000"></div>
<svg class="a" style="left:149px;top:502px" width="17" height="17"><path d="M10.5 5 L10.5 12 L6.5 8.5z" fill="#505050"/></svg>
<svg class="a" style="left:517px;top:502px" width="17" height="17"><path d="M6.5 5 L6.5 12 L10.5 8.5z" fill="#505050"/></svg>
<div class="a" style="left:168px;top:503px;width:115px;height:15px;border:1px solid #979797;border-radius:2px;background:linear-gradient(#f3f3f3 0%,#e8e8e9 45%,#d2d2d3 55%,#c8c8c9 100%);box-shadow:inset 0 0 0 1px rgba(255,255,255,.6)"></div>
<div class="a" style="left:222px;top:507px;width:1px;height:6px;background:#5a5a5a"></div>
<div class="a" style="left:224px;top:507px;width:1px;height:6px;background:#5a5a5a"></div>
<div class="a" style="left:226px;top:507px;width:1px;height:6px;background:#5a5a5a"></div>
<div class="a" style="left:534px;top:502px;width:17px;height:16px;background:#fff"></div>
<div class="a " style="left:144px;top:537px;letter-spacing:0.25px">Поиск</div>
<div class="f" style="left:192px;top:532px;width:204px;height:24px"></div>
<div class="btn b s" style="left:193px;top:557px;width:202px;height:22px;padding-top:4px">Все записи</div>
<div class="a " style="left:565px;top:123px;letter-spacing:0.1px">Отправитель, e-mail</div>
<div class="a " style="left:792px;top:123px;">Статус отправки</div>
<div class="f" style="left:564px;top:139px;width:228px;height:22px;padding-left:5px;letter-spacing:0.15px">1, info@mail.ru</div>
<div class="f b" style="left:792px;top:139px;width:96px;height:22px;padding-left:5px">отправлено</div>
<div class="f" style="left:564px;top:164px;width:324px;height:176px;padding:4px 0 0 4px;line-height:15px;white-space:pre;letter-spacing:0.12px">Текст сообщения

Вложенные файлы:
ПЛАТЕЖКА_35.DOC - Платежка</div>
<svg class="a" style="left:870px;top:165px" width="17" height="174" viewBox="0 0 17 174"><rect width="16" height="174" fill="#f0f0f0"/><rect x="16" width="1" height="174" fill="#fff"/><path d="M4.5 12 L11.5 12 L8 8z" fill="#606060"/><path d="M4.5 163 L11.5 163 L8 167z" fill="#606060"/></svg>
<div class="chk" style="left:564px;top:350px"></div>
<div class="a " style="left:580px;top:350px;letter-spacing:0.06px">Фото договора - 0</div>
<div class="chk" style="left:564px;top:369px"></div>
<div class="a " style="left:580px;top:369px;">Доп. соглашения - 0</div>
<div class="chk" style="left:724px;top:350px"></div>
<div class="a " style="left:740px;top:350px;">Файлы Office - 0</div>
<div class="chk" style="left:724px;top:369px"><svg width="11" height="11" viewBox="0 0 11 11"><path d="M2.5 5.5 L4.5 8.5 L8.5 2" fill="none" stroke="#b8b8b8" stroke-width="1.6"/></svg></div>
<div class="a " style="left:740px;top:369px;">Доп. файлы - 1</div>
<div class="a" style="left:564px;top:389px;width:324px;height:130px;background:#fff;border:1px solid #a0a0a0"></div>
<div class="a" style="left:565px;top:390px;width:305px;height:18px;background:linear-gradient(#fff 0%,#fff 45%,#f0f1f3 55%,#e9ebee 100%)"></div>
<div class="a" style="left:565px;top:407px;width:304px;height:2px;background:linear-gradient(#8c8c8c 0,#8c8c8c 50%,#000 50%,#000 100%)"></div>
<div class="vl" style="left:659px;top:390px;height:17px;background:#e2e3e6"></div>
<div class="vl" style="left:659px;top:409px;height:93px;background:#c8c8c8"></div>
<div class="vl" style="left:812px;top:390px;height:17px;background:#e2e3e6"></div>
<div class="vl" style="left:812px;top:409px;height:93px;background:#c8c8c8"></div>
<div class="a c" style="left:565px;width:94px;top:392px;letter-spacing:0.5px">Файл</div>
<div class="a c" style="left:660px;width:152px;top:392px;letter-spacing:0.3px">Описание файла</div>
<div class="a c" style="left:813px;width:57px;top:392px;letter-spacing:0.4px">Тип</div>
<div class="a s" style="left:567px;top:411px;width:92px;overflow:hidden;letter-spacing:-0.1px">ПЛАТЕЖКА_35.DOC</div>
<div class="a s" style="left:662px;top:411px">Платежка</div>
<div class="a s" style="left:814px;top:411px;letter-spacing:-0.25px">доп. файл</div>
<div class="hl" style="left:565px;top:426px;width:305px"></div>
<div class="hl" style="left:565px;top:444px;width:305px"></div>
<div class="hl" style="left:565px;top:462px;width:305px"></div>
<div class="hl" style="left:565px;top:480px;width:305px"></div>
<div class="hl" style="left:565px;top:498px;width:305px"></div>
<div class="a" style="left:869px;top:390px;width:17px;height:112px;background:#f0f0f0"></div>
<svg class="a" style="left:869px;top:390px" width="17" height="17"><path d="M5.5 10 L12.5 10 L9 6.5z" fill="#484848"/></svg>
<svg class="a" style="left:869px;top:485px" width="17" height="17"><path d="M5.5 8.2 L12.5 8.2 L9 11.8z" fill="#484848"/></svg>
<div class="a" style="left:870px;top:429px;width:15px;height:56px;border:1px solid #979797;border-radius:2px;background:linear-gradient(90deg,#f3f3f3 0%,#e8e8e9 45%,#d2d2d3 55%,#c8c8c9 100%);box-shadow:inset 0 0 0 1px rgba(255,255,255,.6)"></div>
<div class="a" style="left:874px;top:454px;width:7px;height:1px;background:#5a5a5a"></div>
<div class="a" style="left:874px;top:456px;width:7px;height:1px;background:#5a5a5a"></div>
<div class="a" style="left:874px;top:458px;width:7px;height:1px;background:#5a5a5a"></div>
<div class="a" style="left:874px;top:460px;width:7px;height:1px;background:#5a5a5a"></div>
<div class="a" style="left:565px;top:502px;width:305px;height:17px;background:#f0f0f0"></div>
<div class="a" style="left:566px;top:502px;width:4px;height:17px;background:#000"></div>
<svg class="a" style="left:569px;top:502px" width="17" height="17"><path d="M10.5 5 L10.5 12 L6.5 8.5z" fill="#505050"/></svg>
<svg class="a" style="left:853px;top:502px" width="17" height="17"><path d="M6.5 5 L6.5 12 L10.5 8.5z" fill="#505050"/></svg>
<div class="a" style="left:588px;top:503px;width:131px;height:15px;border:1px solid #979797;border-radius:2px;background:linear-gradient(#f3f3f3 0%,#e8e8e9 45%,#d2d2d3 55%,#c8c8c9 100%);box-shadow:inset 0 0 0 1px rgba(255,255,255,.6)"></div>
<div class="a" style="left:650px;top:507px;width:1px;height:6px;background:#5a5a5a"></div>
<div class="a" style="left:652px;top:507px;width:1px;height:6px;background:#5a5a5a"></div>
<div class="a" style="left:654px;top:507px;width:1px;height:6px;background:#5a5a5a"></div>
<div class="a" style="left:870px;top:502px;width:17px;height:16px;background:#fff"></div>
<div class="btn" style="left:565px;top:521px;width:94px;height:15px;border-color:#5a93bd;background:linear-gradient(#eef7fc 0%,#dceff9 48%,#c9e6f7 52%,#bfe0f4 100%);box-shadow:inset 0 0 0 1px #8fdcf8;font-size:11px;line-height:15px;letter-spacing:0.1px">открыть файл<div class="a" style="left:2px;top:2px;right:2px;bottom:2px;border:1px dotted #000"></div></div>
<div class="btn" style="left:793px;top:533px;width:95px;height:46px"></div>
<svg class="a" style="left:832px;top:542px" width="16" height="16" viewBox="0 0 16 16" shape-rendering="crispEdges"><rect x="0" y="0" width="1" height="1" fill="#cbcbcb"/><rect x="1" y="0" width="8" height="1" fill="#000"/><rect x="9" y="0" width="7" height="1" fill="#cbcbcb"/><rect x="0" y="1" width="1" height="1" fill="#cbcbcb"/><rect x="1" y="1" width="1" height="1" fill="#000"/><rect x="2" y="1" width="1" height="1" fill="#a0a024"/><rect x="3" y="1" width="1" height="1" fill="#000"/><rect x="4" y="1" width="4" height="1" fill="#fff"/><rect x="8" y="1" width="1" height="1" fill="#000"/><rect x="9" y="1" width="7" height="1" fill="#cbcbcb"/><rect x="0" y="2" width="1" height="1" fill="#cbcbcb"/><rect x="1" y="2" width="1" height="1" fill="#000"/><rect x="2" y="2" width="2" height="1" fill="#a0a024"/><rect x="4" y="2" width="1" height="1" fill="#000"/><rect x="5" y="2" width="3" height="1" fill="#fff"/><rect x="8" y="2" width="1" height="1" fill="#000"/><rect x="9" y="2" width="4" height="1" fill="#cbcbcb"/><rect x="13" y="2" width="1" height="1" fill="#0000a0"/><rect x="14" y="2" width="2" height="1" fill="#cbcbcb"/><rect x="0" y="3" width="1" height="1" fill="#cbcbcb"/><rect x="1" y="3" width="1" height="1" fill="#000"/><rect x="2" y="3" width="3" height="1" fill="#a0a024"/><rect x="5" y="3" width="1" height="1" fill="#000"/><rect x="6" y="3" width="2" height="1" fill="#fff"/><rect x="8" y="3" width="1" height="1" fill="#000"/><rect x="9" y="3" width="3" height="1" fill="#cbcbcb"/><rect x="12" y="3" width="2" height="1" fill="#0000a0"/><rect x="14" y="3" width="2" height="1" fill="#cbcbcb"/><rect x="0" y="4" width="1" height="1" fill="#cbcbcb"/><rect x="1" y="4" width="1" height="1" fill="#000"/><rect x="2" y="4" width="3" height="1" fill="#a0a024"/><rect x="5" y="4" width="1" height="1" fill="#000"/><rect x="6" y="4" width="2" height="1" fill="#fff"/><rect x="8" y="4" width="1" height="1" fill="#000"/><rect x="9" y="4" width="2" height="1" fill="#cbcbcb"/><rect x="11" y="4" width="5" height="1" fill="#0000a0"/><rect x="0" y="5" width="1" height="1" fill="#cbcbcb"/><rect x="1" y="5" width="1" height="1" fill="#000"/><rect x="2" y="5" width="3" height="1" fill="#a0a024"/><rect x="5" y="5" width="1" height="1" fill="#000"/><rect x="6" y="5" width="2" height="1" fill="#fff"/><rect x="8" y="5" width="1" height="1" fill="#000"/><rect x="9" y="5" width="1" height="1" fill="#cbcbcb"/><rect x="10" y="5" width="6" height="1" fill="#0000a0"/><rect x="0" y="6" width="1" height="1" fill="#cbcbcb"/><rect x="1" y="6" width="1" height="1" fill="#000"/><rect x="2" y="6" width="3" height="1" fill="#a0a024"/><rect x="5" y="6" width="1" height="1" fill="#000"/><rect x="6" y="6" width="2" height="1" fill="#fff"/><rect x="8" y="6" width="1" height="1" fill="#000"/><rect x="9" y="6" width="2" height="1" fill="#cbcbcb"/><rect x="11" y="6" width="5" height="1" fill="#0000a0"/><rect x="0" y="7" width="1" height="1" fill="#cbcbcb"/><rect x="1" y="7" width="1" height="1" fill="#000"/><rect x="2" y="7" width="2" height="1" fill="#a0a024"/><rect x="4" y="7" width="2" height="1" fill="#000"/><rect x="6" y="7" width="2" height="1" fill="#fff"/><rect x="8" y="7" width="1" height="1" fill="#000"/><rect x="9" y="7" width="3" height="1" fill="#cbcbcb"/><rect x="12" y="7" width="2" height="1" fill="#0000a0"/><rect x="14" y="7" width="2" height="1" fill="#cbcbcb"/><rect x="0" y="8" width="1" height="1" fill="#cbcbcb"/><rect x="1" y="8" width="1" height="1" fill="#000"/><rect x="2" y="8" width="3" height="1" fill="#a0a024"/><rect x="5" y="8" width="1" height="1" fill="#000"/><rect x="6" y="8" width="2" height="1" fill="#fff"/><rect x="8" y="8" width="1" height="1" fill="#000"/><rect x="9" y="8" width="4" height="1" fill="#cbcbcb"/><rect x="13" y="8" width="1" height="1" fill="#0000a0"/><rect x="14" y="8" width="2" height="1" fill="#cbcbcb"/><rect x="0" y="9" width="1" height="1" fill="#cbcbcb"/><rect x="1" y="9" width="1" height="1" fill="#000"/><rect x="2" y="9" width="3" height="1" fill="#a0a024"/><rect x="5" y="9" width="1" height="1" fill="#000"/><rect x="6" y="9" width="2" height="1" fill="#fff"/><rect x="8" y="9" width="1" height="1" fill="#000"/><rect x="9" y="9" width="7" height="1" fill="#cbcbcb"/><rect x="0" y="10" width="2" height="1" fill="#000"/><rect x="2" y="10" width="3" height="1" fill="#a0a024"/><rect x="5" y="10" width="8" height="1" fill="#000"/><rect x="13" y="10" width="3" height="1" fill="#cbcbcb"/><rect x="0" y="11" width="2" height="1" fill="#cbcbcb"/><rect x="2" y="11" width="1" height="1" fill="#000"/><rect x="3" y="11" width="2" height="1" fill="#a0a024"/><rect x="5" y="11" width="1" height="1" fill="#000"/><rect x="6" y="11" width="10" height="1" fill="#cbcbcb"/><rect x="0" y="12" width="3" height="1" fill="#cbcbcb"/><rect x="3" y="12" width="1" height="1" fill="#000"/><rect x="4" y="12" width="1" height="1" fill="#a0a024"/><rect x="5" y="12" width="1" height="1" fill="#000"/><rect x="6" y="12" width="10" height="1" fill="#cbcbcb"/><rect x="0" y="13" width="4" height="1" fill="#cbcbcb"/><rect x="4" y="13" width="2" height="1" fill="#000"/><rect x="6" y="13" width="10" height="1" fill="#cbcbcb"/><rect x="0" y="14" width="5" height="1" fill="#cbcbcb"/><rect x="5" y="14" width="1" height="1" fill="#000"/><rect x="6" y="14" width="10" height="1" fill="#cbcbcb"/></svg>
<div class="a c" style="left:793px;width:95px;top:563px;color:#2018c0">Выход</div>
</body></html>
